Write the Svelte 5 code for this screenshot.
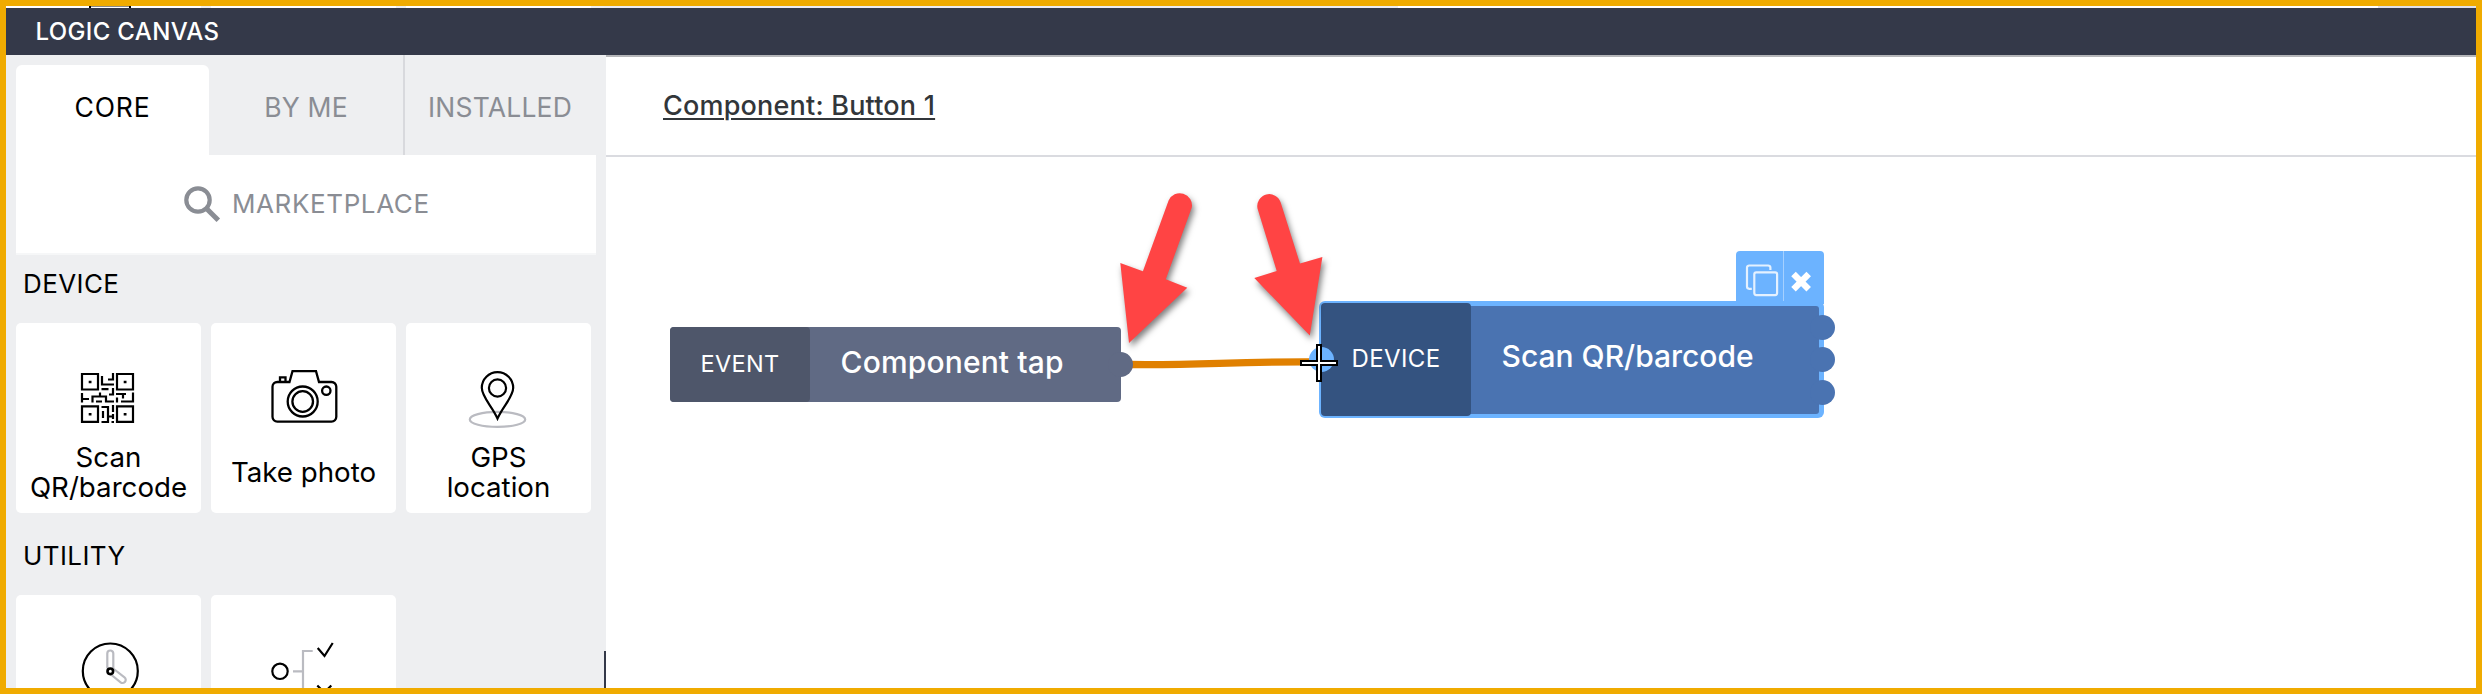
<script>
  const tabs = ['CORE', 'BY ME', 'INSTALLED'];
  const sections = [
    {
      title: 'DEVICE',
      cards: [
        { icon: 'qr', label: 'Scan QR/barcode' },
        { icon: 'camera', label: 'Take photo' },
        { icon: 'pin', label: 'GPS location' }
      ]
    },
    {
      title: 'UTILITY',
      cards: [
        { icon: 'clock', label: '' },
        { icon: 'branch', label: '' }
      ]
    }
  ];
  const ports = [12, 44.5, 77];
</script>

<div class="frame">
  <div class="strip">
    <i class="gap" style="width:10px;margin-left:195px"></i>
    <i class="gap" style="width:10px;margin-left:185px"></i>
    <i class="gap" style="width:13px;margin-left:185px"></i>
    <i class="pale"></i>
    <i class="pale end"></i>
    <i class="stub"></i>
  </div>
  <header>LOGIC CANVAS</header>
  <div class="body">
    <aside>
      <nav>
        {#each tabs as t, i}
          <div class="tab" class:active={i === 0} class:ruled={i === 1}><span>{t}</span></div>
        {/each}
      </nav>
      <div class="market">
        <svg width="37" height="37" viewBox="0 0 37 37" fill="none" stroke="#8a8d94">
          <circle cx="14" cy="14" r="11.7" stroke-width="4.2" />
          <path d="M23.2 23.2L34.3 34.3" stroke-width="5" />
        </svg>
        <span>MARKETPLACE</span>
      </div>
      {#each sections as s}
        <section>
          <h2>{s.title}</h2>
          <div class="cards">
            {#each s.cards as c}
              <div class="card">
                {#if c.icon === 'qr'}
                  <svg viewBox="-65 -50 185 119" stroke-width="2.2">
                    <path d="M1 1h16v15.5H1zM36 1h16v15.5H36zM1 33.3h16v15.5H1zM36 33.3h16v15.5H36z" />
                    <path d="M7.7 9h2.8M42.7 9h2.8M7.7 41.2h2.8M42.7 41.2h2.8" stroke-width="2.6" />
                    <path d="M21 3v8.5h12M32 0v6.5h-5M20.5 16.2h7M32 15v6.5h-4M1 20v9.5M1 26h7M11.5 29.5V23.5h13.5v5h8M19 19.500v4M15 28.5h6M35 21h10M42 21v4.5M36 29.5v-5M40 28.5h12v-9M20.5 34h6.5v15h-6.5M22 38v7M32 32v7M27.5 43.5h5.5M32 41v5M30.5 49h2.5" />
                  </svg>
                {:else if c.icon === 'camera'}
                  <svg viewBox="211 323 185 119" stroke-width="2.3">
                    <path d="M289.5 382l3-10.8h23.5l3 10.8h12.5a4.8 4.8 0 0 1 4.8 4.8v30a4.8 4.8 0 0 1-4.8 4.8h-54.2a4.8 4.8 0 0 1-4.8-4.8v-30a4.8 4.8 0 0 1 4.8-4.8zM280 382v-4.6h5.5v4.6" />
                    <circle cx="302.7" cy="401.5" r="15" />
                    <circle cx="302.7" cy="401.5" r="10.3" />
                    <circle cx="326.3" cy="390.7" r="4.2" />
                  </svg>
                {:else if c.icon === 'pin'}
                  <svg viewBox="406 323 185 119" stroke-width="2.2">
                    <ellipse cx="497.5" cy="419.4" rx="27.7" ry="7.5" class="soft" />
                    <path d="M497.5 418.5C492 406 481.8 397 481.8 387.8a15.7 15.7 0 0 1 31.4 0C513.2 397 503 406 497.5 418.5z" />
                    <circle cx="497.5" cy="388" r="8.6" />
                  </svg>
                {:else if c.icon === 'clock'}
                  <svg viewBox="16 595 185 119" stroke-width="2.2">
                    <circle cx="110.3" cy="671" r="27.5" />
                    <path d="M107.3 668.5V653.5a3 3 0 0 1 6 0v15M113.8 669l10.7 8.3a3 3 0 0 1-3.9 5L110.3 674" class="soft" />
                    <circle cx="110.3" cy="671.3" r="2.8" stroke-width="2.6" />
                  </svg>
                {:else}
                  <svg viewBox="211 595 185 119" stroke-width="2.2">
                    <path d="M293 671.3h10M312.7 651H303V693" class="soft" />
                    <circle cx="280" cy="671.3" r="7.7" />
                    <path d="M317.7 648l6.800 8 8.2-13M317.3 685.5l14 14M331.3 685.5l-14 14" />
                  </svg>
                {/if}
                <p class:narrow={c.icon === 'pin'}>{c.label}</p>
              </div>
            {/each}
          </div>
        </section>
      {/each}
      <i class="splitter"></i>
    </aside>

    <main>
      <div class="crumb"><span>Component: Button 1</span></div>
      <div class="canvas">
        <svg class="layer" viewBox="606 157 1870 531">
          <path d="M1128 364.5C1205 365.5 1235 361 1325 362" fill="none" stroke="#e08000" stroke-width="7.3" />
        </svg>

        <div class="node event">
          <b>EVENT</b><span>Component tap</span>
          <i class="port"></i>
        </div>

        <div class="tools">
          <svg width="88" height="53" viewBox="0 0 88 53" fill="none">
            <path d="M15.8 37.8H13.2a2.2 2.2 0 0 1-2.2-2.2V16.7a2.2 2.2 0 0 1 2.2-2.2h19a2.2 2.2 0 0 1 2.2 2.2v2.3" stroke="#e4f1ff" stroke-width="2.2" />
            <rect x="18.3" y="21.3" width="22.8" height="22.8" rx="2" stroke="#e4f1ff" stroke-width="2.2" />
            <path d="M47.5 0v51" stroke="#a5d0ff" />
            <path d="M57.5 23L72.7 38.2M72.7 23L57.5 38.2" stroke="#fff" stroke-width="6.4" />
          </svg>
        </div>
        <div class="node device">
          <b>DEVICE</b><span>Scan QR/barcode</span>
          {#each ports as y}<i class="port" style="top:{y}px"></i>{/each}
          <i class="inlet"></i>
        </div>

        <svg class="layer top" viewBox="606 157 1870 531">
          <g fill="#ff4444" class="arrows">
            <path d="M1168.6 200.5A12.2 12.2 0 0 1 1191.8 207.5L1165.8 279.3L1187.3 287.7L1129 343L1120.3 263L1142.9 271.2z" />
            <path d="M1257.5 208.5A12 12 0 0 1 1280.7 202.5L1300 263.5L1322.4 257L1309.8 335.5L1254.3 278L1276.7 271z" />
          </g>
          <path d="M1317 345h4v16h16v4h-16v16h-4v-16h-16v-4h16z" fill="#fff" stroke="#000" stroke-width="2" />
        </svg>
      </div>
    </main>
  </div>
</div>

<style>
  :global(body) { margin: 0; }
  .frame {
    box-sizing: border-box;
    width: 2482px;
    height: 694px;
    border: 6px solid #f0ab00;
    overflow: hidden;
    background: #fff;
    font-family: Inter, sans-serif;
    display: flex;
    flex-direction: column;
  }
  .strip { height: 2px; flex: none; display: flex; position: relative; }
  .gap { background: #eeeff1; }
  .pale { width: 794px; background: #ececf2; }
  .pale.end { width: 98px; margin-left: auto; background: #dfe0e8; }
  .stub {
    position: absolute;
    left: 83px;
    top: 0;
    width: 38px;
    height: 2px;
    background: linear-gradient(#8a8a8a 50%, #fff 50%);
    border: solid #000;
    border-width: 0 2px;
  }
  header {
    flex: none;
    height: 47px;
    line-height: 47px;
    padding-left: 29.5px;
    background: #343949;
    color: #fff;
    font-size: 24px;
    letter-spacing: 0.35px;
    font-weight: 450;
  }
  .body { flex: 1; display: flex; min-height: 0; }
  aside {
    position: relative;
    box-sizing: border-box;
    width: 600px;
    padding: 0 10px;
    background: #eeeff1;
    overflow: hidden;
  }
  nav { display: flex; height: 100px; }
  .tab {
    box-sizing: border-box;
    width: 193px;
    padding-top: 10px;
    display: flex;
    align-items: stretch;
    color: #8a8d94;
    font-size: 26.5px;
    letter-spacing: 0.2px;
  }
  .tab span { flex: 1; display: flex; align-items: center; justify-content: center; padding-bottom: 7px; }
  .tab.active { color: #000; letter-spacing: 0.8px; }
  .tab.active span { background: #fff; border-radius: 6px 6px 0 0; }
  .tab.ruled { width: 196px; border-right: 2px solid #d8d9dd; }
  .tab:last-child { width: 190px; }
  .market {
    width: 580px;
    height: 98px;
    background: #fff;
    border-bottom: 2px solid #f6f7f8;
    display: flex;
    align-items: center;
    color: #8a8d94;
    font-size: 26px;
    letter-spacing: 0.6px;
  }
  .market svg { margin-left: 168px; }
  .market span { margin: 0 0 2px 11px; }
  section { height: 272px; }
  h2 {
    margin: 0;
    height: 68px;
    line-height: 57px;
    padding-left: 7px;
    font-weight: 400;
    font-size: 26px;
    letter-spacing: 0.4px;
    color: #000;
  }
  .cards { display: flex; gap: 10px; }
  .card { width: 185px; height: 190px; background: #fff; border-radius: 5px; overflow: hidden; }
  .card svg { display: block; width: 185px; height: 119px; fill: none; stroke: #000; }
  .card .soft { stroke: #babbc1; }
  .card p {
    margin: 0 6px;
    height: 60px;
    display: flex;
    align-items: center;
    justify-content: center;
    text-align: center;
    font-size: 27.7px;
    line-height: 30px;
    color: #000;
  }
  .card p.narrow { margin: 0 30px; }
  .splitter { position: absolute; right: 0; bottom: 0; width: 2px; height: 37px; background: #343949; }
  main { flex: 1; display: flex; flex-direction: column; background: #fff; border-top: 2px solid #b5b6b9; }
  .crumb {
    flex: none;
    height: 98px;
    line-height: 97px;
    padding-left: 57px;
    border-bottom: 2px solid #dadbe0;
    color: #32363a;
    font-size: 27px;
    font-weight: 500;
    letter-spacing: 0.2px;
  }
  .crumb span {
    text-decoration: underline;
    text-decoration-thickness: 2px;
    text-underline-offset: 3px;
  }
  .canvas { position: relative; flex: 1; }
  .layer { position: absolute; left: 0; top: 0; width: 1870px; height: 531px; }
  .layer.top { z-index: 2; }
  .arrows { filter: drop-shadow(2px 4px 3px rgba(0, 0, 0, 0.5)); }
  .node { position: absolute; display: flex; color: #fff; box-sizing: border-box; }
  .node b {
    font-weight: 400;
    display: flex;
    align-items: center;
    justify-content: center;
    border-radius: 4px;
    padding-bottom: 2px;
    box-sizing: border-box;
  }
  .node span { display: flex; align-items: center; flex: 1; font-size: 30px; font-weight: 450; white-space: nowrap; }
  .port { position: absolute; width: 25px; height: 25px; border-radius: 50%; }
  .event {
    left: 64px;
    top: 170px;
    width: 450.5px;
    height: 75px;
    border-radius: 4px;
    background: #606a84;
  }
  .event b { width: 140px; font-size: 23.5px; letter-spacing: 0.3px; background: #4e566a; }
  .event span { padding: 0 0 6px 30.5px; letter-spacing: 0.15px; }
  .event .port { right: -12.5px; top: 25px; background: #606a84; }
  .device {
    left: 713px;
    top: 144px;
    width: 504.5px;
    height: 117px;
    border-radius: 6px;
    background: #6cb3ff;
    padding: 2px 5px 2px 2px;
  }
  .device b { width: 150px; font-size: 24px; letter-spacing: 0.4px; background: #345380; z-index: 1; }
  .device span {
    margin: 2.5px 0 2.5px -3px;
    padding: 0 0 7px 33.5px;
    background: #4a73b1;
    border-radius: 0 3px 3px 0;
  }
  .device .port { right: -11px; margin-top: 1.5px; background: #4a73b1; }
  .inlet {
    position: absolute;
    z-index: 1;
    left: -10.5px;
    top: 45.5px;
    width: 25px;
    height: 25px;
    border-radius: 50%;
    background: #6cb3ff;
  }
  .tools {
    position: absolute;
    left: 1130px;
    top: 93.5px;
    width: 87.5px;
    height: 53px;
    background: #6cb3ff;
    border-radius: 4px 4px 0 0;
  }
  .tools svg { display: block; }
</style>
